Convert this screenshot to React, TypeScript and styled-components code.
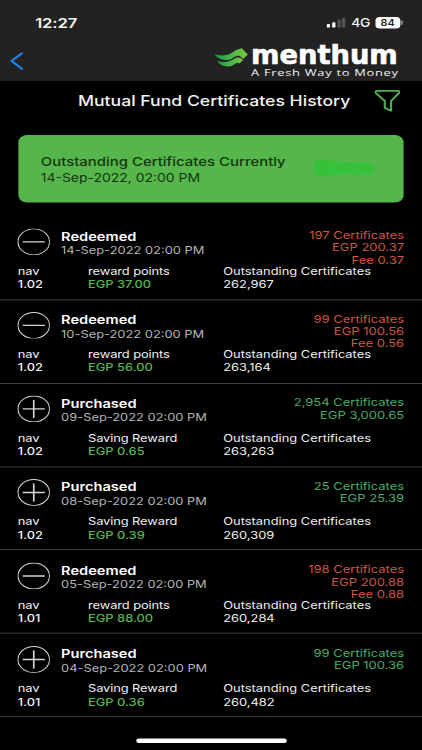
import React from 'react';
import styled, { createGlobalStyle } from 'styled-components';

const GlobalStyle = createGlobalStyle`
  * { box-sizing: border-box; }
  html, body { margin: 0; background: #000; overflow: hidden; }
  #root { width: 422px; height: 750px; overflow: hidden; }
`;

const Screen = styled.main`
  width: 390px;
  height: 844px;
  display: flex;
  flex-direction: column;
  background: #000;
  color: #f2f2f2;
  font-family: Inter, sans-serif;
  white-space: nowrap;
  transform: scale(1.08205, 0.88863);
  transform-origin: 0 0;
`;

const Header = styled.header`
  height: 91px;
  flex: none;
  background: #222;
`;

const StatusBar = styled.div`
  height: 50px;
  padding: 0 18px 0 32.5px;
  display: flex;
  align-items: center;
  justify-content: space-between;
`;

const Clock = styled.span`
  font-size: 15.4px;
  font-weight: 600;
  letter-spacing: -0.1px;
`;

const StatusIcons = styled.div`
  display: flex;
  align-items: center;
`;

const Bars = styled.div`
  display: flex;
  align-items: flex-end;
  gap: 1.7px;
  height: 12px;
  margin-right: 5.5px;
`;

const Bar = styled.i<{ $h: number; $on?: boolean }>`
  width: 3px;
  height: ${(p) => p.$h}px;
  border-radius: 1px;
  background: ${(p) => (p.$on ? '#fff' : '#555')};
`;

const Network = styled.span`
  width: 22px;
  font-size: 12.8px;
  font-weight: 500;
  letter-spacing: -0.5px;
`;

const Battery = styled.span`
  width: 23px;
  height: 13px;
  border-radius: 4px;
  background: #fff;
  color: #222;
  font-size: 10px;
  font-weight: 600;
  line-height: 13.4px;
  text-align: center;
`;

const BatteryTip = styled.i`
  width: 1.5px;
  height: 5px;
  margin-left: 0.8px;
  border-radius: 0 2px 2px 0;
  background: #ccc;
`;

const NavBar = styled.div`
  height: 41px;
  padding: 0 21px 0 9px;
  display: flex;
  justify-content: space-between;
`;

const BackIcon = styled.svg`
  width: 13px;
  height: 21px;
  margin-top: 8px;
`;

const Brand = styled.div`
  display: flex;
`;

const LeafMark = styled.svg`
  width: 31px;
  height: 24px;
  margin: 3px 3.4px 0 0;
`;

const BrandText = styled.div`
  width: 137px;
`;

const Wordmark = styled.div`
  height: 25px;
  font-family: 'DejaVu Sans', sans-serif;
  font-size: 29px;
  font-weight: 700;
  line-height: 25px;
  color: #fff;
  -webkit-text-stroke: 0.7px #fff;
  width: max-content;
  transform: scaleX(0.87);
  transform-origin: 0 0;
`;

const Tagline = styled.div`
  width: max-content;
  font-family: 'Open Sans', sans-serif;
  font-size: 10px;
  line-height: 14px;
  letter-spacing: 0.55px;
  transform: scaleX(1.19);
  transform-origin: 0 0;
`;

const TitleRow = styled.div`
  height: 61px;
  flex: none;
  padding: 9.5px 20px 0 72px;
  display: flex;
  justify-content: space-between;
`;

const Title = styled.h1`
  margin: 2.5px 0 0;
  font-size: 16.3px;
  font-weight: 500;
  line-height: 20px;
`;

const FilterIcon = styled.svg`
  width: 24px;
  height: 25px;
`;

const SummaryCard = styled.section`
  height: 76px;
  flex: none;
  margin: 0 17px;
  padding: 20.5px 27.2px 0 20.7px;
  display: flex;
  justify-content: space-between;
  border-radius: 8px;
  background: #56b64c;
  color: #14350f;
`;

const SummaryTitle = styled.div`
  font-size: 13.8px;
  font-weight: 500;
  line-height: 18px;
`;

const SummaryDate = styled.div`
  margin-top: 1px;
  font-size: 12.9px;
  line-height: 18px;
`;

const Redaction = styled.svg`
  width: 58px;
  height: 21px;
  margin-top: 6px;
`;

const History = styled.ul`
  margin: 15.7px 0 0;
  padding: 0;
  list-style: none;
`;

const Entry = styled.li`
  height: 93.95px;
  padding: 14.2px 16.5px 0;
  border-bottom: 1.7px solid #48484a;
`;

const EntryTop = styled.div`
  height: 40.2px;
  display: flex;
`;

const KindIcon = styled.svg`
  width: 30.4px;
  height: 30.4px;
  flex: none;
  margin: -0.9px 0 0 -0.6px;
`;

const EntryHead = styled.div`
  flex: 1;
  padding-left: 10.2px;
`;

const Kind = styled.div`
  font-size: 13.5px;
  font-weight: 600;
  line-height: 16.6px;
  color: #fff;
`;

const When = styled.div`
  font-size: 11.9px;
  line-height: 15.5px;
  color: #b5b5b5;
`;

const Amounts = styled.div<{ $out: boolean }>`
  font-size: 12px;
  line-height: 14.3px;
  text-align: right;
  color: ${(p) => (p.$out ? '#cf5645' : '#4aac6a')};
`;

const EntryBottom = styled.dl`
  margin: 0;
  display: grid;
  grid-template-columns: 64.8px 125px auto;
`;

const Fact = styled.div`
  font-size: 11.9px;
  line-height: 14.8px;
`;

const Label = styled.dt<{ $tight?: boolean }>`
  letter-spacing: ${(p) => (p.$tight ? '-0.08px' : '0')};
`;

const Value = styled.dd<{ $tone?: 'green' | 'strong' }>`
  margin: 0;
  font-weight: ${(p) => (p.$tone ? 500 : 400)};
  color: ${(p) => (p.$tone === 'green' ? '#52b84e' : '#f2f2f2')};
`;

const HomeIndicator = styled.div`
  width: 139px;
  height: 5px;
  flex: none;
  margin: 23.4px auto 0;
  border-radius: 3px;
  background: #fff;
`;

type Transaction = {
  redeemed: boolean;
  date: string;
  amounts: string[];
  nav: string;
  reward: string;
  outstanding: string;
};

const transactions: Transaction[] = [
  { redeemed: true, date: '14-Sep-2022', amounts: ['197 Certificates', 'EGP 200.37', 'Fee 0.37'], nav: '1.02', reward: 'EGP 37.00', outstanding: '262,967' },
  { redeemed: true, date: '10-Sep-2022', amounts: ['99 Certificates', 'EGP 100.56', 'Fee 0.56'], nav: '1.02', reward: 'EGP 56.00', outstanding: '263,164' },
  { redeemed: false, date: '09-Sep-2022', amounts: ['2,954 Certificates', 'EGP 3,000.65'], nav: '1.02', reward: 'EGP 0.65', outstanding: '263,263' },
  { redeemed: false, date: '08-Sep-2022', amounts: ['25 Certificates', 'EGP 25.39'], nav: '1.02', reward: 'EGP 0.39', outstanding: '260,309' },
  { redeemed: true, date: '05-Sep-2022', amounts: ['198 Certificates', 'EGP 200.88', 'Fee 0.88'], nav: '1.01', reward: 'EGP 88.00', outstanding: '260,284' },
  { redeemed: false, date: '04-Sep-2022', amounts: ['99 Certificates', 'EGP 100.36'], nav: '1.01', reward: 'EGP 0.36', outstanding: '260,482' },
];

function HistoryEntry({ item }: { item: Transaction }) {
  return (
    <Entry>
      <EntryTop>
        <KindIcon viewBox="0 0 30 30" fill="none" stroke="#d8d8d8">
          <circle cx="15" cy="15" r="14.4" strokeWidth="1" />
          <path d={item.redeemed ? 'M5.5 15h19' : 'M5.5 15h19M15 5.5v19'} strokeWidth="1.5" strokeLinecap="round" />
        </KindIcon>
        <EntryHead>
          <Kind>{item.redeemed ? 'Redeemed' : 'Purchased'}</Kind>
          <When>{item.date} 02:00 PM</When>
        </EntryHead>
        <Amounts $out={item.redeemed}>
          {item.amounts.map((a) => (
            <div key={a}>{a}</div>
          ))}
        </Amounts>
      </EntryTop>
      <EntryBottom>
        <Fact>
          <Label $tight>nav</Label>
          <Value $tone="strong">{item.nav}</Value>
        </Fact>
        <Fact>
          <Label $tight>{item.redeemed ? 'reward points' : 'Saving Reward'}</Label>
          <Value $tone="green">{item.reward}</Value>
        </Fact>
        <Fact>
          <Label>Outstanding Certificates</Label>
          <Value>{item.outstanding}</Value>
        </Fact>
      </EntryBottom>
    </Entry>
  );
}

export default function App() {
  return (
    <>
      <GlobalStyle />
      <Screen>
        <Header>
          <StatusBar>
            <Clock>12:27</Clock>
            <StatusIcons>
              <Bars>
                <Bar $h={4} $on />
                <Bar $h={6.2} $on />
                <Bar $h={9} />
                <Bar $h={11.5} />
              </Bars>
              <Network>4G</Network>
              <Battery>84</Battery>
              <BatteryTip />
            </StatusIcons>
          </StatusBar>
          <NavBar>
            <BackIcon viewBox="0 0 13 21" fill="none" stroke="#1b80e8" strokeWidth="2.4" strokeLinecap="round" strokeLinejoin="round">
              <path d="M11.2 2L1.7 10.7L11.2 19.3" />
            </BackIcon>
            <Brand>
              <LeafMark viewBox="0 0 31 24">
                <defs>
                  <linearGradient id="leaf" x1="0" y1="0" x2="1" y2="0">
                    <stop offset="0" stopColor="#159a45" />
                    <stop offset="0.55" stopColor="#4cb848" />
                    <stop offset="1" stopColor="#7cc63e" />
                  </linearGradient>
                </defs>
                <path fill="url(#leaf)" d="M0 7.6C5 10.6 12 10 16.3 6.5C19.2 4.1 21.2 2.4 24.3 2L25 .8L31 8.3L26.6 13.6L25.3 11.6C22.8 8.3 20 10 16.5 12.7C11.5 16 3.5 14.8 0 7.6Z" />
                <path fill="url(#leaf)" d="M2.5 15.5C7.5 18 13.5 16.8 17.6 13.6C20.5 11.4 23 11 25 12.8L26.5 14.8L23.2 18.4C21.8 16.9 20.4 18 18 19.8C12.5 23.8 5.8 22 2.5 15.5Z" />
              </LeafMark>
              <BrandText>
                <Wordmark>menthum</Wordmark>
                <Tagline>A Fresh Way to Money</Tagline>
              </BrandText>
            </Brand>
          </NavBar>
        </Header>
        <TitleRow>
          <Title>Mutual Fund Certificates History</Title>
          <FilterIcon viewBox="0 0 24 25" fill="none" stroke="#4caf50" strokeWidth="2" strokeLinejoin="round">
            <path d="M2.6 1.2H21.4C23 1.2 23.4 2.8 22.4 4L15.4 12.6V23.6L9.6 20.4V12.6L1.6 4C.6 2.8 1 1.2 2.6 1.2Z" />
          </FilterIcon>
        </TitleRow>
        <SummaryCard>
          <div>
            <SummaryTitle>Outstanding Certificates Currently</SummaryTitle>
            <SummaryDate>14-Sep-2022, 02:00 PM</SummaryDate>
          </div>
          <Redaction viewBox="0 0 58 21" fill="#36c13b">
            <path d="M4 2C8 0 12 0 17 1.2C28 4 40 3.6 56 3.8C58 7 58 13 56 17.5C40 18.5 24 16.5 8 19.5C3 20.5 2 17.5 4 15.5C0 13 0 9 3 7.5C1 5.5 2 3.5 4 2Z" />
          </Redaction>
        </SummaryCard>
        <History>
          {transactions.map((t) => (
            <HistoryEntry key={t.date} item={t} />
          ))}
        </History>
        <HomeIndicator />
      </Screen>
    </>
  );
}
